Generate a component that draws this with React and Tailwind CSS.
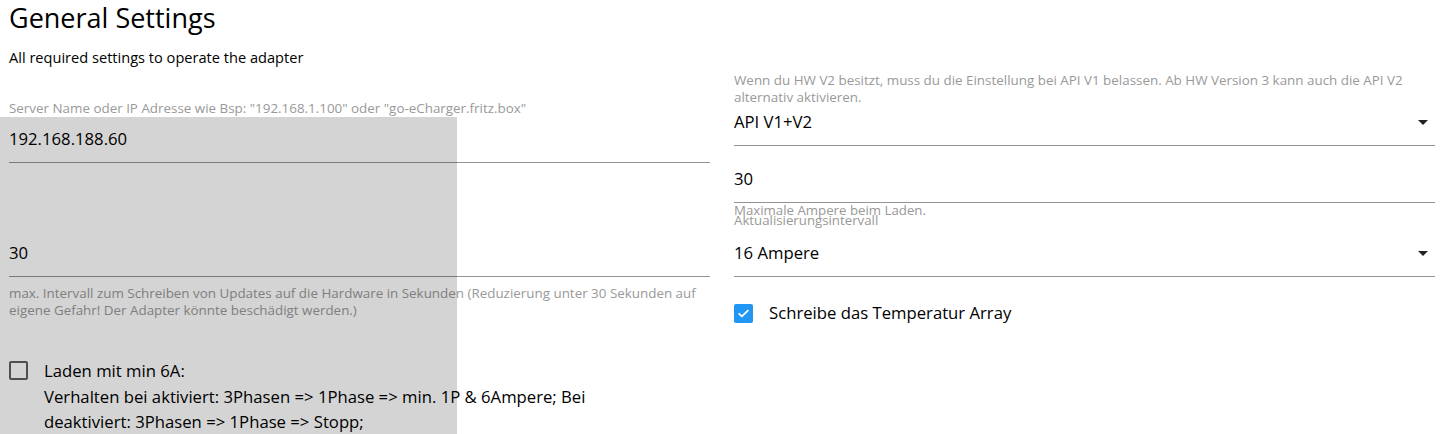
import React, { useState } from 'react';

const font = { fontFamily: '"Open Sans", "Noto Sans", sans-serif' };

const Underline = ({ value, select }) => (
  <div className="relative border-b border-[#949494]">
    <div className="text-[16.7px] leading-6 text-black">{value}</div>
    {select && (
      <span className="absolute right-[7px] top-[10px] h-0 w-0 border-x-[5px] border-t-[5px] border-x-transparent border-t-[#222]" />
    )}
  </div>
);

const Checkbox = ({ checked, onClick }) =>
  checked ? (
    <button onClick={onClick} className="flex h-[19px] w-[19px] items-center justify-center rounded-[2px] bg-[#2196f3]">
      <svg width="13" height="13" viewBox="0 0 24 24" fill="none" stroke="white" strokeWidth="3.2" strokeLinecap="round" strokeLinejoin="round">
        <path d="M4 12.5l5 5L20 6.5" />
      </svg>
    </button>
  ) : (
    <button onClick={onClick} className="h-[19px] w-[19px] rounded-[2px] border-2 border-[#5f5f5f]" />
  );

export default function App() {
  const [minLoad, setMinLoad] = useState(false);
  const [tempArray, setTempArray] = useState(true);

  return (
    <div className="relative h-[434px] w-[1443px] overflow-hidden bg-white px-2 pl-[9px]" style={font}>
      <h1 className="pt-[2px] text-[27px] leading-8 text-black">General Settings</h1>
      <p className="mt-[13px] text-[14.6px] leading-5 text-black">All required settings to operate the adapter</p>

      <div className="grid grid-cols-2 gap-6 mt-[5px]">
        {/* left column */}
        <div>
          <div className="mt-[28px] text-[13.4px] leading-[17px] text-[#999]">
            Server Name oder IP Adresse wie Bsp: "192.168.1.100" oder "go-eCharger.fritz.box"
          </div>
          <div className="mt-[10px]">
            <Underline value={<span className="block pb-[11px]">192.168.188.60</span>} />
          </div>

          <div className="mt-[78px]">
            <Underline value={<span className="block pb-[11px]">30</span>} />
          </div>
          <div className="mt-[8px] text-[13.4px] leading-[17px] text-[#999]">
            max. Intervall zum Schreiben von Updates auf die Hardware in Sekunden (Reduzierung unter 30 Sekunden auf
            <br />
            eigene Gefahr! Der Adapter könnte beschädigt werden.)
          </div>

          <div className="mt-[39px] flex items-start gap-4">
            <div className="pt-[2px]">
              <Checkbox checked={minLoad} onClick={() => setMinLoad(!minLoad)} />
            </div>
            <div className="text-[16.7px] leading-[25.5px] text-black">
              Laden mit min 6A:
              <br />
              Verhalten bei aktiviert: 3Phasen =&gt; 1Phase =&gt; min. 1P &amp; 6Ampere; Bei
              <br />
              deaktiviert: 3Phasen =&gt; 1Phase =&gt; Stopp;
            </div>
          </div>
        </div>

        {/* right column */}
        <div>
          <div className="text-[13.4px] leading-[17px] text-[#999]">
            Wenn du HW V2 besitzt, muss du die Einstellung bei API V1 belassen. Ab HW Version 3 kann auch die API V2
            <br />
            alternativ aktivieren.
          </div>
          <div className="mt-[4px]">
            <Underline select value={<span className="block pb-[11px]">API V1+V2</span>} />
          </div>

          <div className="mt-[21px]">
            <Underline value={<span className="block pb-[11px]">30</span>} />
          </div>
          <div className="mt-[2px] text-[13.25px] leading-[10px] text-[#999]">
            Maximale Ampere beim Laden.
            <br />
            Aktualisierungsintervall
          </div>

          <div className="mt-[16px]">
            <Underline select value={<span className="block pb-[11px]">16 Ampere</span>} />
          </div>

          <div className="mt-[24px] flex items-center gap-4">
            <Checkbox checked={tempArray} onClick={() => setTempArray(!tempArray)} />
            <span className="text-[16.7px] leading-6 text-black">Schreibe das Temperatur Array</span>
          </div>
        </div>
      </div>

      <div className="pointer-events-none absolute left-0 top-[117px] h-[317px] w-[457px] bg-black/[0.17]" />
    </div>
  );
}
